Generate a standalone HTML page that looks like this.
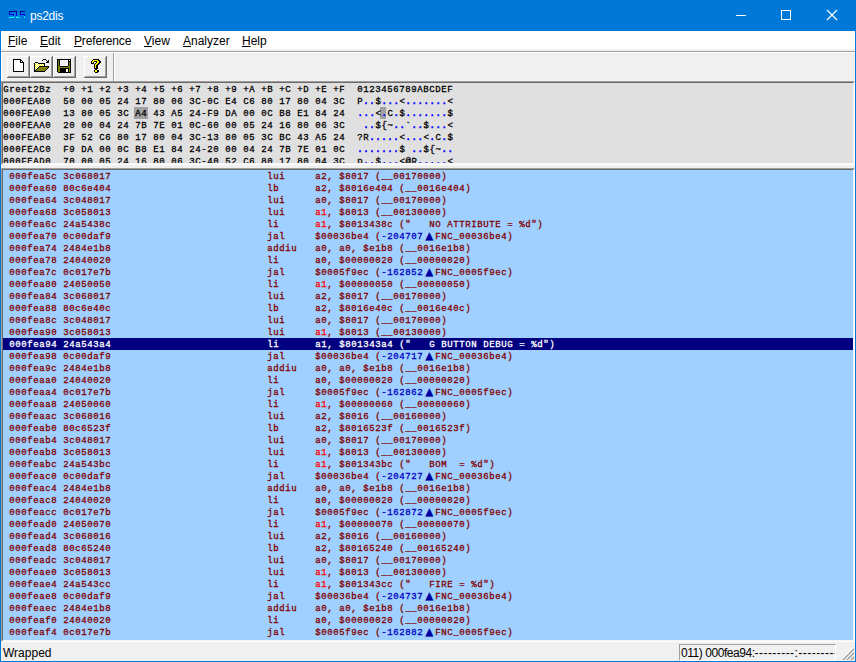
<!DOCTYPE html>
<html lang="en">
<head>
<meta charset="utf-8">
<title>ps2dis</title>
<style>
html,body{margin:0;padding:0;}
body{width:856px;height:662px;position:relative;overflow:hidden;background:#f0f0f0;font-family:"Liberation Sans",sans-serif;font-size:12px;color:#000;}
.abs{position:absolute;}
#title{left:0;top:0;width:856px;height:31px;background:#0078d7;}
#title .cap{position:absolute;left:30px;top:8px;color:#fff;font-size:12px;line-height:16px;letter-spacing:-0.25px;}
#menu{left:1px;top:31px;width:854px;height:18px;background:#fff;}
#menu span{position:absolute;top:2px;line-height:16px;font-size:12px;}
#menu u{text-decoration:underline;}
#bl{left:0;top:31px;width:1px;height:631px;background:#0078d7;}
#br{left:855px;top:31px;width:1px;height:631px;background:#0078d7;}
#bb{left:0;top:661px;width:856px;height:1px;background:#0078d7;}
#tbline{left:1px;top:51px;width:854px;height:1px;background:#a0a0a0;}
#tbline2{left:1px;top:52px;width:854px;height:1px;background:#fff;}
#tbl{left:1px;top:52px;width:1px;height:29px;background:#fff;}
#sep1{left:113px;top:53px;width:1px;height:28px;background:#a0a0a0;}
#sep2{left:114px;top:53px;width:1px;height:28px;background:#fff;}
.tbtn{position:absolute;top:56px;width:23px;height:22px;background:#f0f0f0;box-shadow:inset -1px -1px 0 #696969, inset 1px 1px 0 #fff, inset -2px -2px 0 #a0a0a0;}
/* sunken panes: outer a0a0a0/white, inner 696969/e3e3e3 */
.pane{box-sizing:border-box;border-top:1px solid #a0a0a0;border-left:1px solid #a0a0a0;border-right:1px solid #fff;border-bottom:1px solid #fff;}
.pane > .in{position:absolute;left:0;top:0;right:0;bottom:0;box-sizing:border-box;border-top:1px solid #696969;border-left:1px solid #696969;border-right:1px solid #f4f4f4;border-bottom:1px solid #f4f4f4;overflow:hidden;}
#hex{left:1px;top:81px;width:854px;height:84px;}
#hex > .in{background:#e0e0e0;}
#dis{left:1px;top:168px;width:854px;height:474px;}
#dis > .in{background:#a0d0ff;}
.mono{font-family:"Liberation Mono",monospace;font-size:9px;letter-spacing:0.6px;font-weight:normal;-webkit-text-stroke:0.3px;line-height:12px;}
.hrow,.row span{white-space:pre;}
.hrow{position:relative;height:12px;left:0px;color:#000;}
.hrow b.d{color:#0000ff;-webkit-text-stroke:0.6px #0000ff;}
.hrow i.hl{font-style:normal;}
.hlb{position:absolute;background:#a0a0a0;height:12px;}
#hexin{position:absolute;left:0.3px;top:1px;}
#disin{position:absolute;left:0;top:0;width:850px;}
.row{position:relative;height:12px;color:#800000;}
.row span{position:absolute;top:1px;}
.row .a{left:6.3px;}
.row .m{left:264.3px;}
.row .o{left:312.3px;}
.row b,.hrow b{font-weight:normal;}
.row b.r{color:#ff0000;}
.row b.n{color:#0000c0;}
.row b.t{color:#0000a0;display:inline-block;width:12px;height:12px;text-align:center;font-family:"DejaVu Sans",sans-serif;font-size:10px;letter-spacing:0;line-height:12px;vertical-align:top;position:relative;top:-1px;font-weight:normal;}
.row.sel{background:#000080;color:#fff;}
#status{left:1px;top:642px;width:854px;height:19px;background:#f0f0f0;}
#status .t1{position:absolute;left:2px;top:3px;font-size:12px;line-height:16px;}
#status .box{position:absolute;left:678px;top:2px;width:157px;height:17px;box-sizing:border-box;border-top:1px solid #a0a0a0;border-left:1px solid #a0a0a0;border-right:1px solid #fff;border-bottom:1px solid #fff;overflow:hidden;background:#f0f0f0;}
#status .box > span{position:absolute;left:1px;top:0px;font-size:12px;line-height:16px;white-space:nowrap;}
</style>
</head>
<body>
<div id="title" class="abs">
<div class="cap">ps2dis</div>
<svg class="abs" style="left:730px;top:5px" width="120" height="22" viewBox="0 0 120 22"><g fill="none" stroke="#fff" stroke-width="1"><path d="M6 10.5H16" shape-rendering="crispEdges"/><rect x="51.5" y="5.5" width="9" height="9" shape-rendering="crispEdges"/><path d="M97 5L107 15M107 5L97 15" stroke-width="1.2"/></g></svg>
</div>
<div id="bl" class="abs"></div><div id="br" class="abs"></div><div id="bb" class="abs"></div>
<div id="menu" class="abs">
<span style="left:7px"><u>F</u>ile</span>
<span style="left:39px"><u>E</u>dit</span>
<span style="left:73px;letter-spacing:-0.15px"><u>P</u>reference</span>
<span style="left:143px"><u>V</u>iew</span>
<span style="left:182px"><u>A</u>nalyzer</span>
<span style="left:241px"><u>H</u>elp</span>
</div>
<div id="tbline" class="abs"></div><div id="tbline2" class="abs"></div><div id="tbl" class="abs"></div>
<div id="sep1" class="abs"></div><div id="sep2" class="abs"></div>
<div class="tbtn" style="left:7px"></div>
<div class="tbtn" style="left:30px"></div>
<div class="tbtn" style="left:53px"></div>
<div class="tbtn" style="left:84px"></div>
<svg class="abs" style="left:9px;top:11px;" width="16" height="7" viewBox="0 0 16 7" shape-rendering="crispEdges"><rect x="0" y="0" width="8" height="1" fill="#000080"/><rect x="11" y="0" width="5" height="1" fill="#000080"/><rect x="0" y="1" width="1" height="1" fill="#000080"/><rect x="7" y="1" width="1" height="1" fill="#000080"/><rect x="11" y="1" width="1" height="1" fill="#000080"/><rect x="0" y="2" width="1" height="1" fill="#0000f0"/><rect x="7" y="2" width="1" height="1" fill="#0000f0"/><rect x="11" y="2" width="1" height="1" fill="#0000f0"/><rect x="0" y="3" width="5" height="1" fill="#0000f0"/><rect x="7" y="3" width="1" height="1" fill="#0000f0"/><rect x="11" y="3" width="5" height="1" fill="#0000f0"/><rect x="4" y="4" width="1" height="1" fill="#0000f0"/><rect x="7" y="4" width="1" height="1" fill="#0000f0"/><rect x="15" y="4" width="1" height="1" fill="#0000f0"/><rect x="4" y="5" width="1" height="1" fill="#10c8ff"/><rect x="7" y="5" width="1" height="1" fill="#10c8ff"/><rect x="15" y="5" width="1" height="1" fill="#10c8ff"/><rect x="0" y="6" width="5" height="1" fill="#00ffff"/><rect x="7" y="6" width="4" height="1" fill="#00ffff"/><rect x="15" y="6" width="1" height="1" fill="#00ffff"/></svg>
<svg class="abs" style="left:13px;top:59px;" width="11" height="13" viewBox="0 0 11 13" shape-rendering="crispEdges"><rect x="0" y="0" width="8" height="1" fill="#000"/><rect x="0" y="1" width="1" height="1" fill="#000"/><rect x="1" y="1" width="6" height="1" fill="#fff"/><rect x="7" y="1" width="2" height="1" fill="#000"/><rect x="0" y="2" width="1" height="1" fill="#000"/><rect x="1" y="2" width="6" height="1" fill="#fff"/><rect x="7" y="2" width="1" height="1" fill="#000"/><rect x="8" y="2" width="1" height="1" fill="#fff"/><rect x="9" y="2" width="1" height="1" fill="#000"/><rect x="0" y="3" width="1" height="1" fill="#000"/><rect x="1" y="3" width="6" height="1" fill="#fff"/><rect x="7" y="3" width="4" height="1" fill="#000"/><rect x="0" y="4" width="1" height="1" fill="#000"/><rect x="1" y="4" width="9" height="1" fill="#fff"/><rect x="10" y="4" width="1" height="1" fill="#000"/><rect x="0" y="5" width="1" height="1" fill="#000"/><rect x="1" y="5" width="9" height="1" fill="#fff"/><rect x="10" y="5" width="1" height="1" fill="#000"/><rect x="0" y="6" width="1" height="1" fill="#000"/><rect x="1" y="6" width="9" height="1" fill="#fff"/><rect x="10" y="6" width="1" height="1" fill="#000"/><rect x="0" y="7" width="1" height="1" fill="#000"/><rect x="1" y="7" width="9" height="1" fill="#fff"/><rect x="10" y="7" width="1" height="1" fill="#000"/><rect x="0" y="8" width="1" height="1" fill="#000"/><rect x="1" y="8" width="9" height="1" fill="#fff"/><rect x="10" y="8" width="1" height="1" fill="#000"/><rect x="0" y="9" width="1" height="1" fill="#000"/><rect x="1" y="9" width="9" height="1" fill="#fff"/><rect x="10" y="9" width="1" height="1" fill="#000"/><rect x="0" y="10" width="1" height="1" fill="#000"/><rect x="1" y="10" width="9" height="1" fill="#fff"/><rect x="10" y="10" width="1" height="1" fill="#000"/><rect x="0" y="11" width="1" height="1" fill="#000"/><rect x="1" y="11" width="9" height="1" fill="#fff"/><rect x="10" y="11" width="1" height="1" fill="#000"/><rect x="0" y="12" width="11" height="1" fill="#000"/></svg>
<svg class="abs" style="left:34px;top:59px;" width="16" height="13" viewBox="0 0 16 13" shape-rendering="crispEdges"><rect x="9" y="0" width="3" height="1" fill="#000"/><rect x="8" y="1" width="1" height="1" fill="#000"/><rect x="12" y="1" width="1" height="1" fill="#000"/><rect x="14" y="1" width="1" height="1" fill="#000"/><rect x="13" y="2" width="2" height="1" fill="#000"/><rect x="1" y="3" width="3" height="1" fill="#000"/><rect x="12" y="3" width="3" height="1" fill="#000"/><rect x="0" y="4" width="1" height="1" fill="#000"/><rect x="1" y="4" width="1" height="1" fill="#fff"/><rect x="2" y="4" width="1" height="1" fill="#ffff00"/><rect x="3" y="4" width="1" height="1" fill="#fff"/><rect x="4" y="4" width="7" height="1" fill="#000"/><rect x="0" y="5" width="1" height="1" fill="#000"/><rect x="1" y="5" width="1" height="1" fill="#ffff00"/><rect x="2" y="5" width="1" height="1" fill="#fff"/><rect x="3" y="5" width="1" height="1" fill="#ffff00"/><rect x="4" y="5" width="1" height="1" fill="#fff"/><rect x="5" y="5" width="1" height="1" fill="#ffff00"/><rect x="6" y="5" width="1" height="1" fill="#fff"/><rect x="7" y="5" width="1" height="1" fill="#ffff00"/><rect x="8" y="5" width="1" height="1" fill="#fff"/><rect x="9" y="5" width="1" height="1" fill="#ffff00"/><rect x="10" y="5" width="1" height="1" fill="#000"/><rect x="0" y="6" width="1" height="1" fill="#000"/><rect x="1" y="6" width="1" height="1" fill="#fff"/><rect x="2" y="6" width="1" height="1" fill="#ffff00"/><rect x="3" y="6" width="1" height="1" fill="#fff"/><rect x="4" y="6" width="1" height="1" fill="#ffff00"/><rect x="5" y="6" width="1" height="1" fill="#fff"/><rect x="6" y="6" width="1" height="1" fill="#ffff00"/><rect x="7" y="6" width="1" height="1" fill="#fff"/><rect x="8" y="6" width="1" height="1" fill="#ffff00"/><rect x="9" y="6" width="1" height="1" fill="#fff"/><rect x="10" y="6" width="1" height="1" fill="#000"/><rect x="0" y="7" width="1" height="1" fill="#000"/><rect x="1" y="7" width="1" height="1" fill="#ffff00"/><rect x="2" y="7" width="1" height="1" fill="#fff"/><rect x="3" y="7" width="1" height="1" fill="#ffff00"/><rect x="4" y="7" width="1" height="1" fill="#fff"/><rect x="5" y="7" width="10" height="1" fill="#000"/><rect x="0" y="8" width="1" height="1" fill="#000"/><rect x="1" y="8" width="1" height="1" fill="#fff"/><rect x="2" y="8" width="1" height="1" fill="#ffff00"/><rect x="3" y="8" width="1" height="1" fill="#fff"/><rect x="4" y="8" width="1" height="1" fill="#000"/><rect x="5" y="8" width="9" height="1" fill="#808000"/><rect x="14" y="8" width="1" height="1" fill="#000"/><rect x="0" y="9" width="1" height="1" fill="#000"/><rect x="1" y="9" width="1" height="1" fill="#ffff00"/><rect x="2" y="9" width="1" height="1" fill="#fff"/><rect x="3" y="9" width="1" height="1" fill="#000"/><rect x="4" y="9" width="9" height="1" fill="#808000"/><rect x="13" y="9" width="1" height="1" fill="#000"/><rect x="0" y="10" width="1" height="1" fill="#000"/><rect x="1" y="10" width="1" height="1" fill="#fff"/><rect x="2" y="10" width="1" height="1" fill="#000"/><rect x="3" y="10" width="9" height="1" fill="#808000"/><rect x="12" y="10" width="1" height="1" fill="#000"/><rect x="0" y="11" width="2" height="1" fill="#000"/><rect x="2" y="11" width="9" height="1" fill="#808000"/><rect x="11" y="11" width="1" height="1" fill="#000"/><rect x="0" y="12" width="11" height="1" fill="#000"/></svg>
<svg class="abs" style="left:57px;top:59px;" width="14" height="14" viewBox="0 0 14 14" shape-rendering="crispEdges"><rect x="0" y="0" width="14" height="1" fill="#000"/><rect x="0" y="1" width="1" height="1" fill="#000"/><rect x="1" y="1" width="1" height="1" fill="#808000"/><rect x="2" y="1" width="1" height="1" fill="#000"/><rect x="3" y="1" width="8" height="1" fill="#fff"/><rect x="11" y="1" width="1" height="1" fill="#000"/><rect x="12" y="1" width="1" height="1" fill="#fff"/><rect x="13" y="1" width="1" height="1" fill="#000"/><rect x="0" y="2" width="1" height="1" fill="#000"/><rect x="1" y="2" width="1" height="1" fill="#808000"/><rect x="2" y="2" width="1" height="1" fill="#000"/><rect x="3" y="2" width="1" height="1" fill="#fff"/><rect x="4" y="2" width="6" height="1" fill="#f0f0f0"/><rect x="10" y="2" width="1" height="1" fill="#fff"/><rect x="11" y="2" width="3" height="1" fill="#000"/><rect x="0" y="3" width="1" height="1" fill="#000"/><rect x="1" y="3" width="1" height="1" fill="#808000"/><rect x="2" y="3" width="1" height="1" fill="#000"/><rect x="3" y="3" width="1" height="1" fill="#fff"/><rect x="4" y="3" width="6" height="1" fill="#f0f0f0"/><rect x="10" y="3" width="1" height="1" fill="#fff"/><rect x="11" y="3" width="1" height="1" fill="#000"/><rect x="12" y="3" width="1" height="1" fill="#808000"/><rect x="13" y="3" width="1" height="1" fill="#000"/><rect x="0" y="4" width="1" height="1" fill="#000"/><rect x="1" y="4" width="1" height="1" fill="#808000"/><rect x="2" y="4" width="1" height="1" fill="#000"/><rect x="3" y="4" width="1" height="1" fill="#fff"/><rect x="4" y="4" width="6" height="1" fill="#f0f0f0"/><rect x="10" y="4" width="1" height="1" fill="#fff"/><rect x="11" y="4" width="1" height="1" fill="#000"/><rect x="12" y="4" width="1" height="1" fill="#808000"/><rect x="13" y="4" width="1" height="1" fill="#000"/><rect x="0" y="5" width="1" height="1" fill="#000"/><rect x="1" y="5" width="1" height="1" fill="#808000"/><rect x="2" y="5" width="1" height="1" fill="#000"/><rect x="3" y="5" width="1" height="1" fill="#fff"/><rect x="4" y="5" width="6" height="1" fill="#f0f0f0"/><rect x="10" y="5" width="1" height="1" fill="#fff"/><rect x="11" y="5" width="1" height="1" fill="#000"/><rect x="12" y="5" width="1" height="1" fill="#808000"/><rect x="13" y="5" width="1" height="1" fill="#000"/><rect x="0" y="6" width="1" height="1" fill="#000"/><rect x="1" y="6" width="1" height="1" fill="#808000"/><rect x="2" y="6" width="1" height="1" fill="#000"/><rect x="3" y="6" width="8" height="1" fill="#fff"/><rect x="11" y="6" width="1" height="1" fill="#000"/><rect x="12" y="6" width="1" height="1" fill="#808000"/><rect x="13" y="6" width="1" height="1" fill="#000"/><rect x="0" y="7" width="1" height="1" fill="#000"/><rect x="1" y="7" width="2" height="1" fill="#808000"/><rect x="3" y="7" width="8" height="1" fill="#000"/><rect x="11" y="7" width="2" height="1" fill="#808000"/><rect x="13" y="7" width="1" height="1" fill="#000"/><rect x="0" y="8" width="1" height="1" fill="#000"/><rect x="1" y="8" width="12" height="1" fill="#808000"/><rect x="13" y="8" width="1" height="1" fill="#000"/><rect x="0" y="9" width="1" height="1" fill="#000"/><rect x="1" y="9" width="2" height="1" fill="#808000"/><rect x="3" y="9" width="9" height="1" fill="#000"/><rect x="12" y="9" width="1" height="1" fill="#808000"/><rect x="13" y="9" width="1" height="1" fill="#000"/><rect x="0" y="10" width="1" height="1" fill="#000"/><rect x="1" y="10" width="2" height="1" fill="#808000"/><rect x="3" y="10" width="6" height="1" fill="#000"/><rect x="9" y="10" width="2" height="1" fill="#fff"/><rect x="11" y="10" width="1" height="1" fill="#000"/><rect x="12" y="10" width="1" height="1" fill="#808000"/><rect x="13" y="10" width="1" height="1" fill="#000"/><rect x="0" y="11" width="1" height="1" fill="#000"/><rect x="1" y="11" width="2" height="1" fill="#808000"/><rect x="3" y="11" width="6" height="1" fill="#000"/><rect x="9" y="11" width="2" height="1" fill="#fff"/><rect x="11" y="11" width="1" height="1" fill="#000"/><rect x="12" y="11" width="1" height="1" fill="#808000"/><rect x="13" y="11" width="1" height="1" fill="#000"/><rect x="0" y="12" width="1" height="1" fill="#000"/><rect x="1" y="12" width="2" height="1" fill="#808000"/><rect x="3" y="12" width="6" height="1" fill="#000"/><rect x="9" y="12" width="2" height="1" fill="#fff"/><rect x="11" y="12" width="1" height="1" fill="#000"/><rect x="12" y="12" width="1" height="1" fill="#808000"/><rect x="13" y="12" width="1" height="1" fill="#000"/><rect x="1" y="13" width="13" height="1" fill="#000"/></svg>
<svg class="abs" style="left:91px;top:59px;" width="10" height="14" viewBox="0 0 10 14" shape-rendering="crispEdges"><rect x="2" y="0" width="6" height="1" fill="#000"/><rect x="1" y="1" width="1" height="1" fill="#000"/><rect x="2" y="1" width="5" height="1" fill="#ffff00"/><rect x="7" y="1" width="2" height="1" fill="#000"/><rect x="0" y="2" width="1" height="1" fill="#000"/><rect x="1" y="2" width="2" height="1" fill="#ffff00"/><rect x="3" y="2" width="3" height="1" fill="#000"/><rect x="6" y="2" width="2" height="1" fill="#ffff00"/><rect x="8" y="2" width="2" height="1" fill="#000"/><rect x="0" y="3" width="1" height="1" fill="#000"/><rect x="1" y="3" width="1" height="1" fill="#ffff00"/><rect x="2" y="3" width="1" height="1" fill="#000"/><rect x="4" y="3" width="1" height="1" fill="#fff"/><rect x="5" y="3" width="1" height="1" fill="#000"/><rect x="6" y="3" width="2" height="1" fill="#ffff00"/><rect x="8" y="3" width="2" height="1" fill="#000"/><rect x="0" y="4" width="3" height="1" fill="#000"/><rect x="4" y="4" width="1" height="1" fill="#000"/><rect x="5" y="4" width="2" height="1" fill="#ffff00"/><rect x="7" y="4" width="2" height="1" fill="#000"/><rect x="3" y="5" width="1" height="1" fill="#000"/><rect x="4" y="5" width="2" height="1" fill="#ffff00"/><rect x="6" y="5" width="2" height="1" fill="#000"/><rect x="3" y="6" width="1" height="1" fill="#000"/><rect x="4" y="6" width="1" height="1" fill="#ffff00"/><rect x="5" y="6" width="2" height="1" fill="#000"/><rect x="3" y="7" width="1" height="1" fill="#000"/><rect x="4" y="7" width="1" height="1" fill="#ffff00"/><rect x="5" y="7" width="2" height="1" fill="#000"/><rect x="3" y="8" width="1" height="1" fill="#000"/><rect x="4" y="8" width="1" height="1" fill="#ffff00"/><rect x="5" y="8" width="2" height="1" fill="#000"/><rect x="3" y="9" width="4" height="1" fill="#000"/><rect x="4" y="10" width="2" height="1" fill="#000"/><rect x="3" y="11" width="1" height="1" fill="#000"/><rect x="4" y="11" width="2" height="1" fill="#ffff00"/><rect x="6" y="11" width="2" height="1" fill="#000"/><rect x="3" y="12" width="1" height="1" fill="#000"/><rect x="4" y="12" width="2" height="1" fill="#ffff00"/><rect x="6" y="12" width="2" height="1" fill="#000"/><rect x="4" y="13" width="3" height="1" fill="#000"/></svg>
<div id="hex" class="abs pane"><div class="in mono"><div class="hlb" style="left:131px;top:24px;width:14px"></div><div class="hlb" style="left:377px;top:24px;width:6px"></div><div id="hexin">
<div class="hrow">Greet2Bz  +0 +1 +2 +3 +4 +5 +6 +7 +8 +9 +A +B +C +D +E +F  0123456789ABCDEF</div>
<div class="hrow">000FEA80  50 00 05 24 17 80 06 3C-0C E4 C6 80 17 80 04 3C  P<b class="d">..</b>$<b class="d">...</b>&lt;<b class="d">.......</b>&lt;</div>
<div class="hrow">000FEA90  13 80 05 3C <i class="hl">A4</i> 43 A5 24-F9 DA 00 0C B8 E1 84 24  <b class="d">...</b>&lt;<i class="hl"><b class="d">.</b></i>C<b class="d">.</b>$<b class="d">.......</b>$</div>
<div class="hrow">000FEAA0  20 00 04 24 7B 7E 01 0C-60 00 05 24 16 80 06 3C   <b class="d">..</b>${~<b class="d">..</b>`<b class="d">..</b>$<b class="d">...</b>&lt;</div>
<div class="hrow">000FEAB0  3F 52 C6 80 17 80 04 3C-13 80 05 3C BC 43 A5 24  ?R<b class="d">.....</b>&lt;<b class="d">...</b>&lt;<b class="d">.</b>C<b class="d">.</b>$</div>
<div class="hrow">000FEAC0  F9 DA 00 0C B8 E1 84 24-20 00 04 24 7B 7E 01 0C  <b class="d">.......</b>$ <b class="d">..</b>${~<b class="d">..</b></div>
<div class="hrow">000FEAD0  70 00 05 24 16 80 06 3C-40 52 C6 80 17 80 04 3C  p<b class="d">..</b>$<b class="d">...</b>&lt;@R<b class="d">.....</b>&lt;</div>
</div></div></div>
<div id="dis" class="abs pane"><div class="in mono"><div id="disin">
<div class="row"><span class="a">000fea5c 3c068017</span><span class="m">lui</span><span class="o">a2, $8017 (__00170000)</span></div>
<div class="row"><span class="a">000fea60 80c6e404</span><span class="m">lb</span><span class="o">a2, $8016e404 (__0016e404)</span></div>
<div class="row"><span class="a">000fea64 3c048017</span><span class="m">lui</span><span class="o">a0, $8017 (__00170000)</span></div>
<div class="row"><span class="a">000fea68 3c058013</span><span class="m">lui</span><span class="o"><b class="r">a1</b>, $8013 (__00130000)</span></div>
<div class="row"><span class="a">000fea6c 24a5438c</span><span class="m">li</span><span class="o"><b class="r">a1</b>, $8013438c ("   NO ATTRIBUTE = %d")</span></div>
<div class="row"><span class="a">000fea70 0c00daf9</span><span class="m">jal</span><span class="o">$00036be4 (<b class="n">-204707</b><b class="t">▲</b>FNC_00036be4)</span></div>
<div class="row"><span class="a">000fea74 2484e1b8</span><span class="m">addiu</span><span class="o">a0, a0, $e1b8 (__0016e1b8)</span></div>
<div class="row"><span class="a">000fea78 24040020</span><span class="m">li</span><span class="o">a0, $00000020 (__00000020)</span></div>
<div class="row"><span class="a">000fea7c 0c017e7b</span><span class="m">jal</span><span class="o">$0005f9ec (<b class="n">-162852</b><b class="t">▲</b>FNC_0005f9ec)</span></div>
<div class="row"><span class="a">000fea80 24050050</span><span class="m">li</span><span class="o"><b class="r">a1</b>, $00000050 (__00000050)</span></div>
<div class="row"><span class="a">000fea84 3c068017</span><span class="m">lui</span><span class="o">a2, $8017 (__00170000)</span></div>
<div class="row"><span class="a">000fea88 80c6e40c</span><span class="m">lb</span><span class="o">a2, $8016e40c (__0016e40c)</span></div>
<div class="row"><span class="a">000fea8c 3c048017</span><span class="m">lui</span><span class="o">a0, $8017 (__00170000)</span></div>
<div class="row"><span class="a">000fea90 3c058013</span><span class="m">lui</span><span class="o"><b class="r">a1</b>, $8013 (__00130000)</span></div>
<div class="row sel"><span class="a">000fea94 24a543a4</span><span class="m">li</span><span class="o">a1, $801343a4 ("   G BUTTON DEBUG = %d")</span></div>
<div class="row"><span class="a">000fea98 0c00daf9</span><span class="m">jal</span><span class="o">$00036be4 (<b class="n">-204717</b><b class="t">▲</b>FNC_00036be4)</span></div>
<div class="row"><span class="a">000fea9c 2484e1b8</span><span class="m">addiu</span><span class="o">a0, a0, $e1b8 (__0016e1b8)</span></div>
<div class="row"><span class="a">000feaa0 24040020</span><span class="m">li</span><span class="o">a0, $00000020 (__00000020)</span></div>
<div class="row"><span class="a">000feaa4 0c017e7b</span><span class="m">jal</span><span class="o">$0005f9ec (<b class="n">-162862</b><b class="t">▲</b>FNC_0005f9ec)</span></div>
<div class="row"><span class="a">000feaa8 24050060</span><span class="m">li</span><span class="o"><b class="r">a1</b>, $00000060 (__00000060)</span></div>
<div class="row"><span class="a">000feaac 3c068016</span><span class="m">lui</span><span class="o">a2, $8016 (__00160000)</span></div>
<div class="row"><span class="a">000feab0 80c6523f</span><span class="m">lb</span><span class="o">a2, $8016523f (__0016523f)</span></div>
<div class="row"><span class="a">000feab4 3c048017</span><span class="m">lui</span><span class="o">a0, $8017 (__00170000)</span></div>
<div class="row"><span class="a">000feab8 3c058013</span><span class="m">lui</span><span class="o"><b class="r">a1</b>, $8013 (__00130000)</span></div>
<div class="row"><span class="a">000feabc 24a543bc</span><span class="m">li</span><span class="o"><b class="r">a1</b>, $801343bc ("   BOM  = %d")</span></div>
<div class="row"><span class="a">000feac0 0c00daf9</span><span class="m">jal</span><span class="o">$00036be4 (<b class="n">-204727</b><b class="t">▲</b>FNC_00036be4)</span></div>
<div class="row"><span class="a">000feac4 2484e1b8</span><span class="m">addiu</span><span class="o">a0, a0, $e1b8 (__0016e1b8)</span></div>
<div class="row"><span class="a">000feac8 24040020</span><span class="m">li</span><span class="o">a0, $00000020 (__00000020)</span></div>
<div class="row"><span class="a">000feacc 0c017e7b</span><span class="m">jal</span><span class="o">$0005f9ec (<b class="n">-162872</b><b class="t">▲</b>FNC_0005f9ec)</span></div>
<div class="row"><span class="a">000fead0 24050070</span><span class="m">li</span><span class="o"><b class="r">a1</b>, $00000070 (__00000070)</span></div>
<div class="row"><span class="a">000fead4 3c068016</span><span class="m">lui</span><span class="o">a2, $8016 (__00160000)</span></div>
<div class="row"><span class="a">000fead8 80c65240</span><span class="m">lb</span><span class="o">a2, $80165240 (__00165240)</span></div>
<div class="row"><span class="a">000feadc 3c048017</span><span class="m">lui</span><span class="o">a0, $8017 (__00170000)</span></div>
<div class="row"><span class="a">000feae0 3c058013</span><span class="m">lui</span><span class="o"><b class="r">a1</b>, $8013 (__00130000)</span></div>
<div class="row"><span class="a">000feae4 24a543cc</span><span class="m">li</span><span class="o"><b class="r">a1</b>, $801343cc ("   FIRE = %d")</span></div>
<div class="row"><span class="a">000feae8 0c00daf9</span><span class="m">jal</span><span class="o">$00036be4 (<b class="n">-204737</b><b class="t">▲</b>FNC_00036be4)</span></div>
<div class="row"><span class="a">000feaec 2484e1b8</span><span class="m">addiu</span><span class="o">a0, a0, $e1b8 (__0016e1b8)</span></div>
<div class="row"><span class="a">000feaf0 24040020</span><span class="m">li</span><span class="o">a0, $00000020 (__00000020)</span></div>
<div class="row"><span class="a">000feaf4 0c017e7b</span><span class="m">jal</span><span class="o">$0005f9ec (<b class="n">-162882</b><b class="t">▲</b>FNC_0005f9ec)</span></div>
</div></div></div>
<div id="status" class="abs"><span class="t1">Wrapped</span><div class="box"><span><span style="letter-spacing:-0.45px">011) 000fea94:</span><span style="letter-spacing:0.45px">---------:---------</span></span></div>
<svg class="abs" style="left:841px;top:6px" width="12" height="12" viewBox="0 0 12 12"><g fill="none"><path d="M12 -1L-1 12M12 3L3 12M12 7L7 12" stroke="#fff" stroke-width="1.2"/><path d="M12.5 0.5L0.5 12.5M12.5 4.5L4.5 12.5M12.5 8.5L8.5 12.5" stroke="#a0a0a0" stroke-width="1.5"/></g></svg>
</div>
</body>
</html>
